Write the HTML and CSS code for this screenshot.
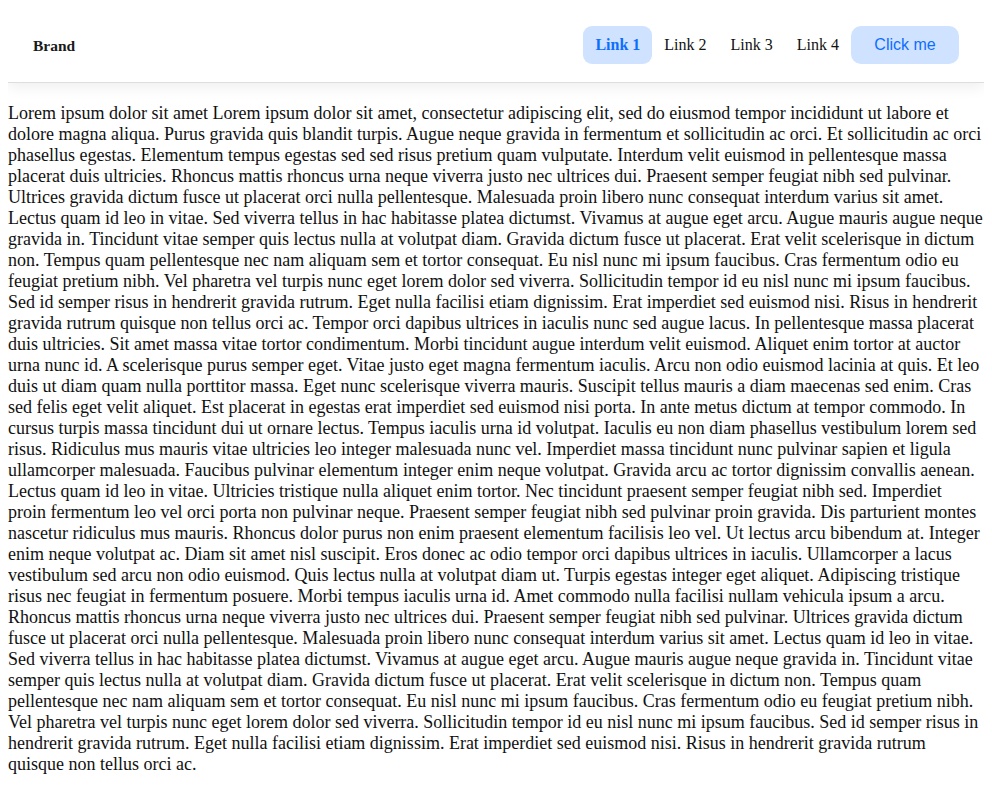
FILE: index.html
```html
<!DOCTYPE html>
<html>
<head>
<meta charset="utf-8">
<link rel="stylesheet" href="styles.css">
</head>
<body>
<nav class="navbar">
  <div class="brand">Brand</div>
  <div class="nav-right">
    <a class="nav-link active">Link 1</a>
    <a class="nav-link">Link 2</a>
    <a class="nav-link">Link 3</a>
    <a class="nav-link">Link 4</a>
    <button class="btn">Click me</button>
  </div>
</nav>
<p class="content">Lorem ipsum dolor sit amet Lorem ipsum dolor sit amet, consectetur adipiscing elit, sed do eiusmod tempor incididunt ut labore et dolore magna aliqua. Purus gravida quis blandit turpis. Augue neque gravida in fermentum et sollicitudin ac orci. Et sollicitudin ac orci phasellus egestas. Elementum tempus egestas sed sed risus pretium quam vulputate. Interdum velit euismod in pellentesque massa placerat duis ultricies. Rhoncus mattis rhoncus urna neque viverra justo nec ultrices dui. Praesent semper feugiat nibh sed pulvinar. Ultrices gravida dictum fusce ut placerat orci nulla pellentesque. Malesuada proin libero nunc consequat interdum varius sit amet. Lectus quam id leo in vitae. Sed viverra tellus in hac habitasse platea dictumst. Vivamus at augue eget arcu. Augue mauris augue neque gravida in. Tincidunt vitae semper quis lectus nulla at volutpat diam. Gravida dictum fusce ut placerat. Erat velit scelerisque in dictum non. Tempus quam pellentesque nec nam aliquam sem et tortor consequat. Eu nisl nunc mi ipsum faucibus. Cras fermentum odio eu feugiat pretium nibh. Vel pharetra vel turpis nunc eget lorem dolor sed viverra. Sollicitudin tempor id eu nisl nunc mi ipsum faucibus. Sed id semper risus in hendrerit gravida rutrum. Eget nulla facilisi etiam dignissim. Erat imperdiet sed euismod nisi. Risus in hendrerit gravida rutrum quisque non tellus orci ac. Tempor orci dapibus ultrices in iaculis nunc sed augue lacus. In pellentesque massa placerat duis ultricies. Sit amet massa vitae tortor condimentum. Morbi tincidunt augue interdum velit euismod. Aliquet enim tortor at auctor urna nunc id. A scelerisque purus semper eget. Vitae justo eget magna fermentum iaculis. Arcu non odio euismod lacinia at quis. Et leo duis ut diam quam nulla porttitor massa. Eget nunc scelerisque viverra mauris. Suscipit tellus mauris a diam maecenas sed enim. Cras sed felis eget velit aliquet. Est placerat in egestas erat imperdiet sed euismod nisi porta. In ante metus dictum at tempor commodo. In cursus turpis massa tincidunt dui ut ornare lectus. Tempus iaculis urna id volutpat. Iaculis eu non diam phasellus vestibulum lorem sed risus. Ridiculus mus mauris vitae ultricies leo integer malesuada nunc vel. Imperdiet massa tincidunt nunc pulvinar sapien et ligula ullamcorper malesuada. Faucibus pulvinar elementum integer enim neque volutpat. Gravida arcu ac tortor dignissim convallis aenean. Lectus quam id leo in vitae. Ultricies tristique nulla aliquet enim tortor. Nec tincidunt praesent semper feugiat nibh sed. Imperdiet proin fermentum leo vel orci porta non pulvinar neque. Praesent semper feugiat nibh sed pulvinar proin gravida. Dis parturient montes nascetur ridiculus mus mauris. Rhoncus dolor purus non enim praesent elementum facilisis leo vel. Ut lectus arcu bibendum at. Integer enim neque volutpat ac. Diam sit amet nisl suscipit. Eros donec ac odio tempor orci dapibus ultrices in iaculis. Ullamcorper a lacus vestibulum sed arcu non odio euismod. Quis lectus nulla at volutpat diam ut. Turpis egestas integer eget aliquet. Adipiscing tristique risus nec feugiat in fermentum posuere. Morbi tempus iaculis urna id. Amet commodo nulla facilisi nullam vehicula ipsum a arcu. Rhoncus mattis rhoncus urna neque viverra justo nec ultrices dui. Praesent semper feugiat nibh sed pulvinar. Ultrices gravida dictum fusce ut placerat orci nulla pellentesque. Malesuada proin libero nunc consequat interdum varius sit amet. Lectus quam id leo in vitae. Sed viverra tellus in hac habitasse platea dictumst. Vivamus at augue eget arcu. Augue mauris augue neque gravida in. Tincidunt vitae semper quis lectus nulla at volutpat diam. Gravida dictum fusce ut placerat. Erat velit scelerisque in dictum non. Tempus quam pellentesque nec nam aliquam sem et tortor consequat. Eu nisl nunc mi ipsum faucibus. Cras fermentum odio eu feugiat pretium nibh. Vel pharetra vel turpis nunc eget lorem dolor sed viverra. Sollicitudin tempor id eu nisl nunc mi ipsum faucibus. Sed id semper risus in hendrerit gravida rutrum. Eget nulla facilisi etiam dignissim. Erat imperdiet sed euismod nisi. Risus in hendrerit gravida rutrum quisque non tellus orci ac.</p>
</body>
</html>
```
FILE: styles.css
```css
html, body {
  background: #ffffff;
}
body {
  margin: 8px;
  font-family: "Liberation Serif", "Times New Roman", serif;
  font-size: 16px;
  color: #111;
}
.navbar {
  display: flex;
  align-items: center;
  justify-content: space-between;
  height: 75px;
  box-sizing: border-box;
  padding: 0 25px;
  background: #fff;
  border-bottom: 1px solid #dedede;
  box-shadow: 0 4px 14px rgba(0, 0, 0, 0.07);
}
.brand {
  font-weight: bold;
  font-size: 15.5px;
  color: #1a1a1a;
  padding-top: 1px;
}
.nav-right {
  display: flex;
  align-items: center;
}
.nav-link {
  display: flex;
  align-items: center;
  height: 38px;
  padding: 0 12px;
  border-radius: 9px;
  font-size: 16px;
  color: #111;
  cursor: pointer;
}
.nav-link.active {
  background: #cfe2ff;
  color: #0d6efd;
  font-weight: bold;
}
.btn {
  height: 38px;
  width: 108px;
  border: none;
  border-radius: 10px;
  background: #cfe2ff;
  color: #0d6efd;
  font-family: "Liberation Sans", Arial, sans-serif;
  font-size: 16px;
  cursor: pointer;
}
.content {
  margin: 20px 0 0 0;
  font-size: 18px;
  line-height: 21px;
}
```
